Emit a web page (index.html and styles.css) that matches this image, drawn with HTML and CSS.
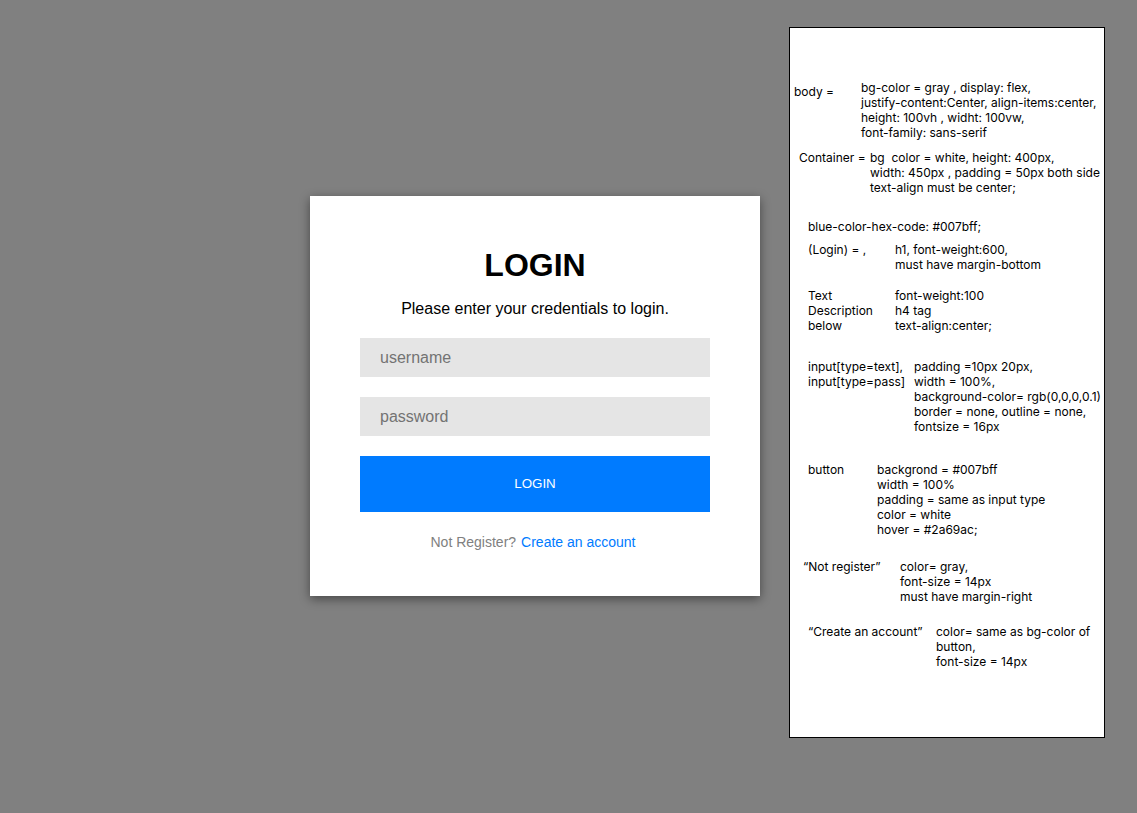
FILE: index.html
```html
<!DOCTYPE html>
<html lang="en">
<head>
<meta charset="utf-8">
<title>Login</title>
<link rel="stylesheet" href="styles.css">
</head>
<body>
  <main class="container">
    <h1 class="title">LOGIN</h1>
    <h4 class="desc">Please enter your credentials to login.</h4>
    <form class="form">
      <input class="field" type="text" placeholder="username">
      <input class="field" type="password" placeholder="password">
      <button class="btn" type="button">LOGIN</button>
    </form>
    <p class="signup"><span class="muted">Not Register?</span><a class="link" href="#">Create an account</a></p>
  </main>

  <aside class="notes">
    <div class="note note--body">
      <div class="note-label note-label--low">body =</div>
      <div class="note-value">bg-color = gray , display: flex,<br>justify-content:Center, align-items:center,<br>height: 100vh , widht: 100vw,<br>font-family: sans-serif</div>
    </div>
    <div class="note note--container">
      <div class="note-label">Container =</div>
      <div class="note-value">bg&nbsp; color = white, height: 400px,<br>width: 450px , padding = 50px both side<br>text-align must be center;</div>
    </div>
    <div class="note note--blue">
      <div class="note-value">blue-color-hex-code: #007bff;</div>
    </div>
    <div class="note note--login">
      <div class="note-label">(Login) = ,</div>
      <div class="note-value">h1, font-weight:600,<br>must have margin-bottom</div>
    </div>
    <div class="note note--text">
      <div class="note-label">Text<br>Description<br>below</div>
      <div class="note-value">font-weight:100<br>h4 tag<br>text-align:center;</div>
    </div>
    <div class="note note--input">
      <div class="note-label">input[type=text],<br>input[type=pass]</div>
      <div class="note-value">padding =10px 20px,<br>width = 100%,<br>background-color= rgb(0,0,0,0.1)<br>border = none, outline = none,<br>fontsize = 16px</div>
    </div>
    <div class="note note--button">
      <div class="note-label">button</div>
      <div class="note-value">backgrond = #007bff<br>width = 100%<br>padding = same as input type<br>color = white<br>hover = #2a69ac;</div>
    </div>
    <div class="note note--not">
      <div class="note-label">“Not register”</div>
      <div class="note-value">color= gray,<br>font-size = 14px<br>must have margin-right</div>
    </div>
    <div class="note note--create">
      <div class="note-label">“Create an account”</div>
      <div class="note-value">color= same as bg-color of<br>button,<br>font-size = 14px</div>
    </div>
  </aside>
</body>
</html>
```

FILE: styles.css
```css
* { box-sizing: border-box; }

html, body {
  margin: 0;
  padding: 0;
}

body {
  background: #808080;
  height: 813px;
  display: flex;
  align-items: flex-start;
  font-family: "Liberation Sans", Arial, sans-serif;
  overflow: hidden;
}

/* ---------- login card ---------- */
.container {
  margin: 196px 0 0 310px;
  width: 450px;
  height: 400px;
  padding: 51px 50px 0;
  background: #fff;
  text-align: center;
  box-shadow: 0 3px 10px rgba(0, 0, 0, 0.45);
  flex: none;
}

.title {
  margin: 0 0 16px;
  font-size: 32px;
  line-height: 37px;
  font-weight: 600;
  color: #000;
}

.desc {
  margin: 0 0 20px;
  font-size: 16px;
  line-height: 18px;
  font-weight: 100;
  color: #000;
}

.form {
  display: flex;
  flex-direction: column;
  gap: 20px;
}

.field {
  display: block;
  width: 100%;
  padding: 10px 20px;
  border: none;
  outline: none;
  background: rgba(0, 0, 0, 0.1);
  font-family: "Liberation Sans", Arial, sans-serif;
  font-size: 16px;
  line-height: 19px;
  height: 39px;
  color: #000;
}

.field::placeholder {
  color: #737373;
}

.btn {
  display: block;
  width: 100%;
  height: 56px;
  padding: 20px;
  border: none;
  background: #007bff;
  color: #fff;
  font-family: "Liberation Sans", Arial, sans-serif;
  font-size: 13.33px;
  line-height: 16px;
  cursor: pointer;
}

.btn:hover { background: #2a69ac; }

.signup {
  margin: 22px 0 0;
  padding-right: 4px;
  font-size: 14px;
  line-height: 16px;
}

.muted {
  color: #808080;
  margin-right: 5px;
}

.link {
  color: #007bff;
  text-decoration: none;
}

/* ---------- notes panel ---------- */
.notes {
  margin: 27px 0 0 29px;
  width: 316px;
  height: 711px;
  border: 1px solid #000;
  background: #fff;
  padding-top: 52px;
  font-family: Inter, "Noto Sans", sans-serif;
  font-size: 12px;
  line-height: 15px;
  color: #000;
  flex: none;
}

.note {
  display: grid;
  white-space: nowrap;
}

.note-label--low { padding-top: 4px; }

.note--body      { padding-left: 4px;  grid-template-columns: 67px 1fr; }
.note--container { padding-left: 9px;  grid-template-columns: 71px 1fr; margin-top: 10px; }
.note--blue      { padding-left: 18px; grid-template-columns: 1fr; margin-top: 24px; }
.note--login     { padding-left: 18px; grid-template-columns: 87px 1fr; margin-top: 8px; }
.note--text      { padding-left: 18px; grid-template-columns: 87px 1fr; margin-top: 16px; }
.note--input     { padding-left: 18px; grid-template-columns: 106px 1fr; margin-top: 26px; }
.note--button    { padding-left: 18px; grid-template-columns: 69px 1fr; margin-top: 28px; }
.note--not       { padding-left: 13px; grid-template-columns: 97px 1fr; margin-top: 22px; }
.note--create    { padding-left: 18px; grid-template-columns: 128px 1fr; margin-top: 20px; }
```
